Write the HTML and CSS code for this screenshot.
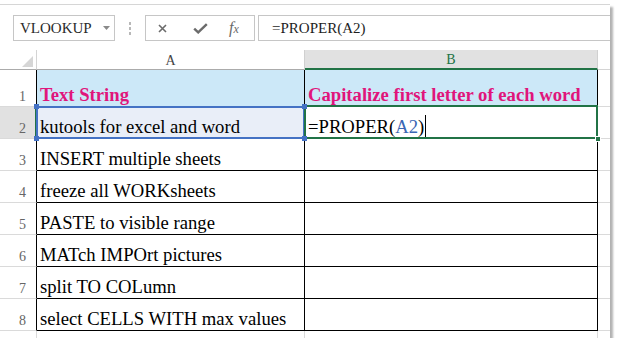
FILE: index.html
```html
<!DOCTYPE html>
<html>
<head>
<meta charset="utf-8">
<link rel="stylesheet" href="styles.css">
</head>
<body>
<div class="window">
  <div class="fbar">
    <div class="namebox">
      <span class="nb-text">VLOOKUP</span>
      <svg class="nb-arrow" width="7" height="4" viewBox="0 0 7 4"><path d="M0 0H7L3.5 4Z" fill="#8a8a8a"/></svg>
    </div>
    <div class="sep"></div>
    <div class="btns">
      <svg class="ic-x" width="9" height="9" viewBox="0 0 9 9"><path d="M1 1L8 8M8 1L1 8" stroke="#6b6b6b" stroke-width="1.6" fill="none"/></svg>
      <svg class="ic-check" width="15" height="11" viewBox="0 0 15 11"><path d="M1.2 5.6L5.2 9.4L13.8 1.2" stroke="#6b6b6b" stroke-width="2.4" fill="none"/></svg>
      <span class="ic-fx"><i>f</i><i class="fx-x">x</i></span>
    </div>
    <div class="formula">=PROPER(A2)</div>
  </div>
  <div class="sheet">
    <div class="corner"><svg width="11" height="11" viewBox="0 0 11 11"><path d="M11 0V11H0Z" fill="#d6d6d6"/></svg></div>
    <div class="colh colh-a">A</div>
    <div class="colh colh-b">B</div>
    <div class="colh colh-rest"></div>

    <div class="rowh">1</div>
    <div class="cell head">Text String</div>
    <div class="cell head">Capitalize first letter of each word</div>
    <div class="rest"></div>

    <div class="rowh rowh-active">2</div>
    <div class="cell cell-ref">kutools for excel and word
      <span class="ref-box"></span>
      <span class="ref-sq sq-tl"></span><span class="ref-sq sq-tr"></span>
      <span class="ref-sq sq-bl"></span><span class="ref-sq sq-br"></span>
    </div>
    <div class="cell cell-active">=PROPER(<span class="ref-text">A2</span>)<span class="caret"></span>
      <span class="active-box"></span>
      <span class="fill-handle"></span>
    </div>
    <div class="rest"></div>

    <div class="rowh">3</div>
    <div class="cell">INSERT multiple sheets</div>
    <div class="cell"></div>
    <div class="rest"></div>

    <div class="rowh">4</div>
    <div class="cell">freeze all WORKsheets</div>
    <div class="cell"></div>
    <div class="rest"></div>

    <div class="rowh">5</div>
    <div class="cell">PASTE to visible range</div>
    <div class="cell"></div>
    <div class="rest"></div>

    <div class="rowh">6</div>
    <div class="cell">MATch IMPOrt pictures</div>
    <div class="cell"></div>
    <div class="rest"></div>

    <div class="rowh">7</div>
    <div class="cell">split TO COLumn</div>
    <div class="cell"></div>
    <div class="rest"></div>

    <div class="rowh">8</div>
    <div class="cell">select CELLS WITH max values</div>
    <div class="cell"></div>
    <div class="rest"></div>

    <div class="rowh rowh-out"></div>
    <div class="cell cell-out"></div>
    <div class="cell cell-out"></div>
    <div class="rest"></div>
  </div>
</div>
</body>
</html>
```

FILE: styles.css
```css
* { box-sizing: border-box; }

body {
  margin: 0;
  background: #ffffff;
  font-family: "Liberation Serif", "Times New Roman", serif;
}

.window {
  width: 610px;
  height: 334px;
  margin-top: 4px;
  border-top: 1px solid #d6d6d6;
  background: #ffffff;
  box-shadow: 3px 3px 2px rgba(0, 0, 0, 0.3);
  overflow: hidden;
}

/* formula bar */
.fbar {
  display: flex;
  align-items: flex-start;
  height: 45px;
  padding-top: 10px;
}

.namebox {
  margin-left: 13px;
  width: 102px;
  height: 26px;
  border: 1px solid #c6c6c6;
  display: flex;
  align-items: center;
  padding-left: 6px;
  padding-right: 4px;
  font-size: 15px;
  line-height: 24px;
  color: #2a2a2a;
}

.nb-arrow { margin-left: auto; }

.sep {
  width: 2px;
  height: 14px;
  margin: 7px 0 0 14px;
  background: repeating-linear-gradient(to bottom, #b8b8b8 0 3px, transparent 3px 5px);
}

.btns {
  margin-left: 14px;
  width: 110px;
  height: 26px;
  border: 1px solid #c6c6c6;
  display: flex;
  align-items: center;
}

.ic-x { margin-left: 12px; }
.ic-check { margin-left: 26px; }

.ic-fx {
  margin-left: 21px;
  color: #6a6a6a;
  font-size: 16px;
  line-height: 16px;
}
.fx-x { font-size: 12px; }

.formula {
  flex: 1;
  margin-left: 3px;
  height: 26px;
  border: 1px solid #c6c6c6;
  border-right: none;
  padding-left: 13px;
  font-size: 15px;
  line-height: 24px;
  color: #1e1e1e;
}

/* sheet grid */
.sheet {
  display: grid;
  grid-template-columns: 37px 268px 293px 12px;
  grid-template-rows: 20px 37px repeat(8, 32px);
}

.corner {
  border-right: 1px solid #d4d4d4;
  border-bottom: 1px solid #ababab;
  display: flex;
  align-items: flex-end;
  justify-content: flex-end;
  padding: 0 3px 2px 0;
}

.colh {
  display: flex;
  align-items: flex-end;
  justify-content: center;
  font-size: 14px;
  line-height: 16px;
  color: #444444;
}

.colh-a {
  border-right: 1px solid #d0d0d0;
  border-bottom: 1px solid #ababab;
}

.colh-b {
  background: #e1e1e1;
  color: #217346;
  border-right: 1px solid #d0d0d0;
  border-bottom: 2px solid #217346;
}

.colh-rest { border-bottom: 1px solid #d4d4d4; }

.rowh {
  display: flex;
  align-items: flex-end;
  justify-content: center;
  padding-left: 9px;
  padding-bottom: 1px;
  font-size: 14px;
  line-height: 16px;
  color: #666666;
  border-right: 1px solid #000000;
  border-bottom: 1px solid #dadada;
}

.rowh-active {
  background: #e1e1e1;
  border-right-color: #217346;
  box-shadow: inset -1px 0 0 #217346;
}

.rowh-out { border-right-color: #dadada; }

.cell {
  position: relative;
  display: flex;
  align-items: flex-end;
  padding-left: 3px;
  font-size: 18.67px;
  line-height: 22px;
  color: #000000;
  white-space: nowrap;
  border-right: 1px solid #000000;
  border-bottom: 1px solid #000000;
}

.cell-out {
  border-right-color: #dadada;
  border-bottom-color: #dadada;
}

.head {
  background: #cce8f8;
  color: #e0157b;
  font-weight: bold;
}

.cell-ref { background: #e9eef8; }

.ref-box {
  position: absolute;
  top: -1px;
  left: -1px;
  right: -1px;
  bottom: -1px;
  border: 2px solid #4472c4;
}

.ref-sq {
  position: absolute;
  width: 5px;
  height: 5px;
  background: #4472c4;
  z-index: 3;
}
.sq-tl { top: -3px; left: -3px; }
.sq-tr { top: -3px; right: -3px; }
.sq-bl { bottom: -3px; left: -3px; }
.sq-br { bottom: -3px; right: -3px; }

.ref-text { color: #3b67b4; }

.caret {
  display: inline-block;
  width: 1px;
  height: 23px;
  margin-left: 1px;
  background: #000000;
  align-self: flex-end;
}

.active-box {
  position: absolute;
  top: -2px;
  left: -1px;
  right: -1px;
  bottom: -1px;
  border: 2px solid #217346;
  z-index: 2;
}

.fill-handle {
  position: absolute;
  right: -4px;
  bottom: -4px;
  width: 6px;
  height: 6px;
  background: #217346;
  border: 1px solid #ffffff;
  z-index: 4;
}

.rest { border-bottom: 1px solid #dadada; }
```
